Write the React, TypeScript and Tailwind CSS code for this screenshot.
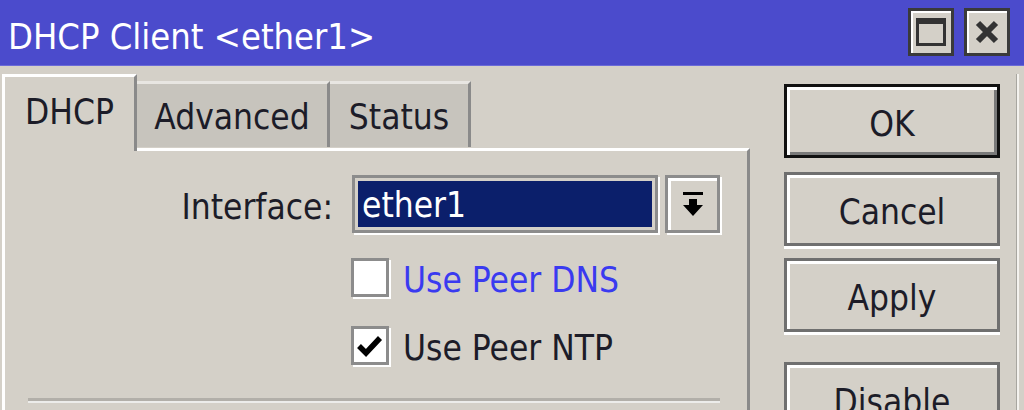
import React from "react";

const font = { fontFamily: '"DejaVu Sans Condensed", "DejaVu Sans", sans-serif' };

function TitleButton({ children }: { children: React.ReactNode }) {
  return (
    <div className="w-[46px] h-[48px] border-[3px] border-[#3a3a3a] bg-[#d4d0c8] flex items-center justify-center shadow-[inset_2px_2px_0_#ffffff]">
      {children}
    </div>
  );
}

function SideButton({ label, primary }: { label: string; primary?: boolean }) {
  return (
    <div
      className={
        "w-[216px] h-[74px] flex items-center justify-center pt-[6px] text-[35px] leading-none text-[#1c1c28] bg-[#d4d0c8] " +
        (primary
          ? "border-[3px] border-[#111111] shadow-[inset_3px_3px_0_#ffffff,inset_-3px_-3px_0_#7a7a7a]"
          : "border-[3px] border-[#6f6f6f] shadow-[inset_3px_3px_0_#ffffff,0_3px_0_#ffffff]")
      }
    >
      {label}
    </div>
  );
}

function Checkbox({ checked }: { checked?: boolean }) {
  return (
    <div className="w-[38px] h-[39px] bg-white border-[3px] border-[#8c8c8c] shadow-[2px_2px_0_#ffffff] flex items-center justify-center">
      {checked && (
        <svg width="26" height="22" viewBox="0 0 26 22">
          <path d="M2 11 L9 18 L23 3" fill="none" stroke="#000" strokeWidth="5.5" />
        </svg>
      )}
    </div>
  );
}

export default function App() {
  return (
    <div className="w-[1024px] h-[410px] overflow-hidden bg-[#d4d0c8] text-[#1c1c28]" style={font}>
      {/* Title bar */}
      <div className="h-[66px] bg-[#4b4bcc] flex items-center justify-between pl-[8px] pr-[14px] border-b border-[#6a6ad8]">
        <span className="text-white text-[36px] leading-none pt-[8px]">DHCP Client &lt;ether1&gt;</span>
        <div className="flex gap-[10px] -mt-[2px]">
          <TitleButton>
            <div className="w-[30px] h-[28px] border-[3px] border-t-[6px] border-[#333333]" />
          </TitleButton>
          <TitleButton>
            <svg width="26" height="26" viewBox="0 0 26 26">
              <path d="M4 4 L22 22 M22 4 L4 22" stroke="#333" strokeWidth="6" />
            </svg>
          </TitleButton>
        </div>
      </div>

      <div className="flex pt-[8px]">
        {/* Left: tabs and panel */}
        <div className="ml-[2px] w-[748px]">
          <div className="flex items-end h-[74px]">
            <div className="relative z-10 w-[135px] h-[77px] -mb-[3px] bg-[#d4d0c8] border-t-[3px] border-l-[3px] border-white border-r-[3px] border-r-[#8a8a8a] flex items-start justify-center pt-[18px] text-[35px] leading-none">
              DHCP
            </div>
            <div className="w-[193px] h-[66px] mb-[1px] bg-[#c7c4bd] border-t-[3px] border-t-[#e8e6e2] border-r-[3px] border-r-[#8a8a8a] flex items-center justify-center pt-[4px] text-[35px] leading-none">
              Advanced
            </div>
            <div className="w-[141px] h-[66px] mb-[1px] bg-[#c7c4bd] border-t-[3px] border-t-[#e8e6e2] border-r-[3px] border-r-[#8a8a8a] flex items-center justify-center pt-[4px] text-[35px] leading-none">
              Status
            </div>
          </div>
          <div className="h-[300px] border-t-[3px] border-l-[3px] border-white border-r-[3px] border-r-[#8a8a8a] pt-[24px]">
            <div className="flex items-center">
              <div className="w-[328px] text-right text-[35px] leading-none pt-[6px]">Interface:</div>
              <div className="ml-[19px] w-[306px] h-[58px] border-[3px] border-[#8c8c8c] shadow-[2px_2px_0_#ffffff] p-[3px]">
                <div className="h-full bg-[#0b1f6b] text-white text-[35px] leading-none flex items-center pl-[4px] pt-[2px]">
                  ether1
                </div>
              </div>
              <div className="ml-[7px] w-[55px] h-[58px] border-[3px] border-[#8c8c8c] shadow-[inset_3px_3px_0_#ffffff,2px_2px_0_#ffffff] flex items-center justify-center">
                <svg width="24" height="28" viewBox="0 0 24 28">
                  <rect x="2" y="2" width="20" height="3" fill="#000" />
                  <path d="M8 9 H16 V15 H22 L12 26 L2 15 H8 Z" fill="#000" />
                </svg>
              </div>
            </div>

            <div className="flex items-center mt-[24px] pl-[346px]">
              <Checkbox />
              <span className="ml-[14px] pt-[6px] text-[35px] leading-none text-[#3a3af0]">Use Peer DNS</span>
            </div>
            <div className="flex items-center mt-[27px] pl-[346px]">
              <Checkbox checked />
              <span className="ml-[14px] pt-[6px] text-[35px] leading-none">Use Peer NTP</span>
            </div>

            <div className="ml-[23px] mt-[32px] w-[692px] h-[3px] bg-[#b2afa9] shadow-[0_2px_0_#ececea]" />
          </div>
        </div>

        {/* Right: buttons */}
        <div className="ml-[34px] pt-[10px] flex flex-col">
          <SideButton label="OK" primary />
          <div className="mt-[14px]">
            <SideButton label="Cancel" />
          </div>
          <div className="mt-[12px]">
            <SideButton label="Apply" />
          </div>
          <div className="mt-[30px]">
            <SideButton label="Disable" />
          </div>
        </div>
        <div className="ml-[16px] w-[3px] h-[400px] bg-[#f4f2ee] border-l border-[#a8a6a0]" />
      </div>
    </div>
  );
}
